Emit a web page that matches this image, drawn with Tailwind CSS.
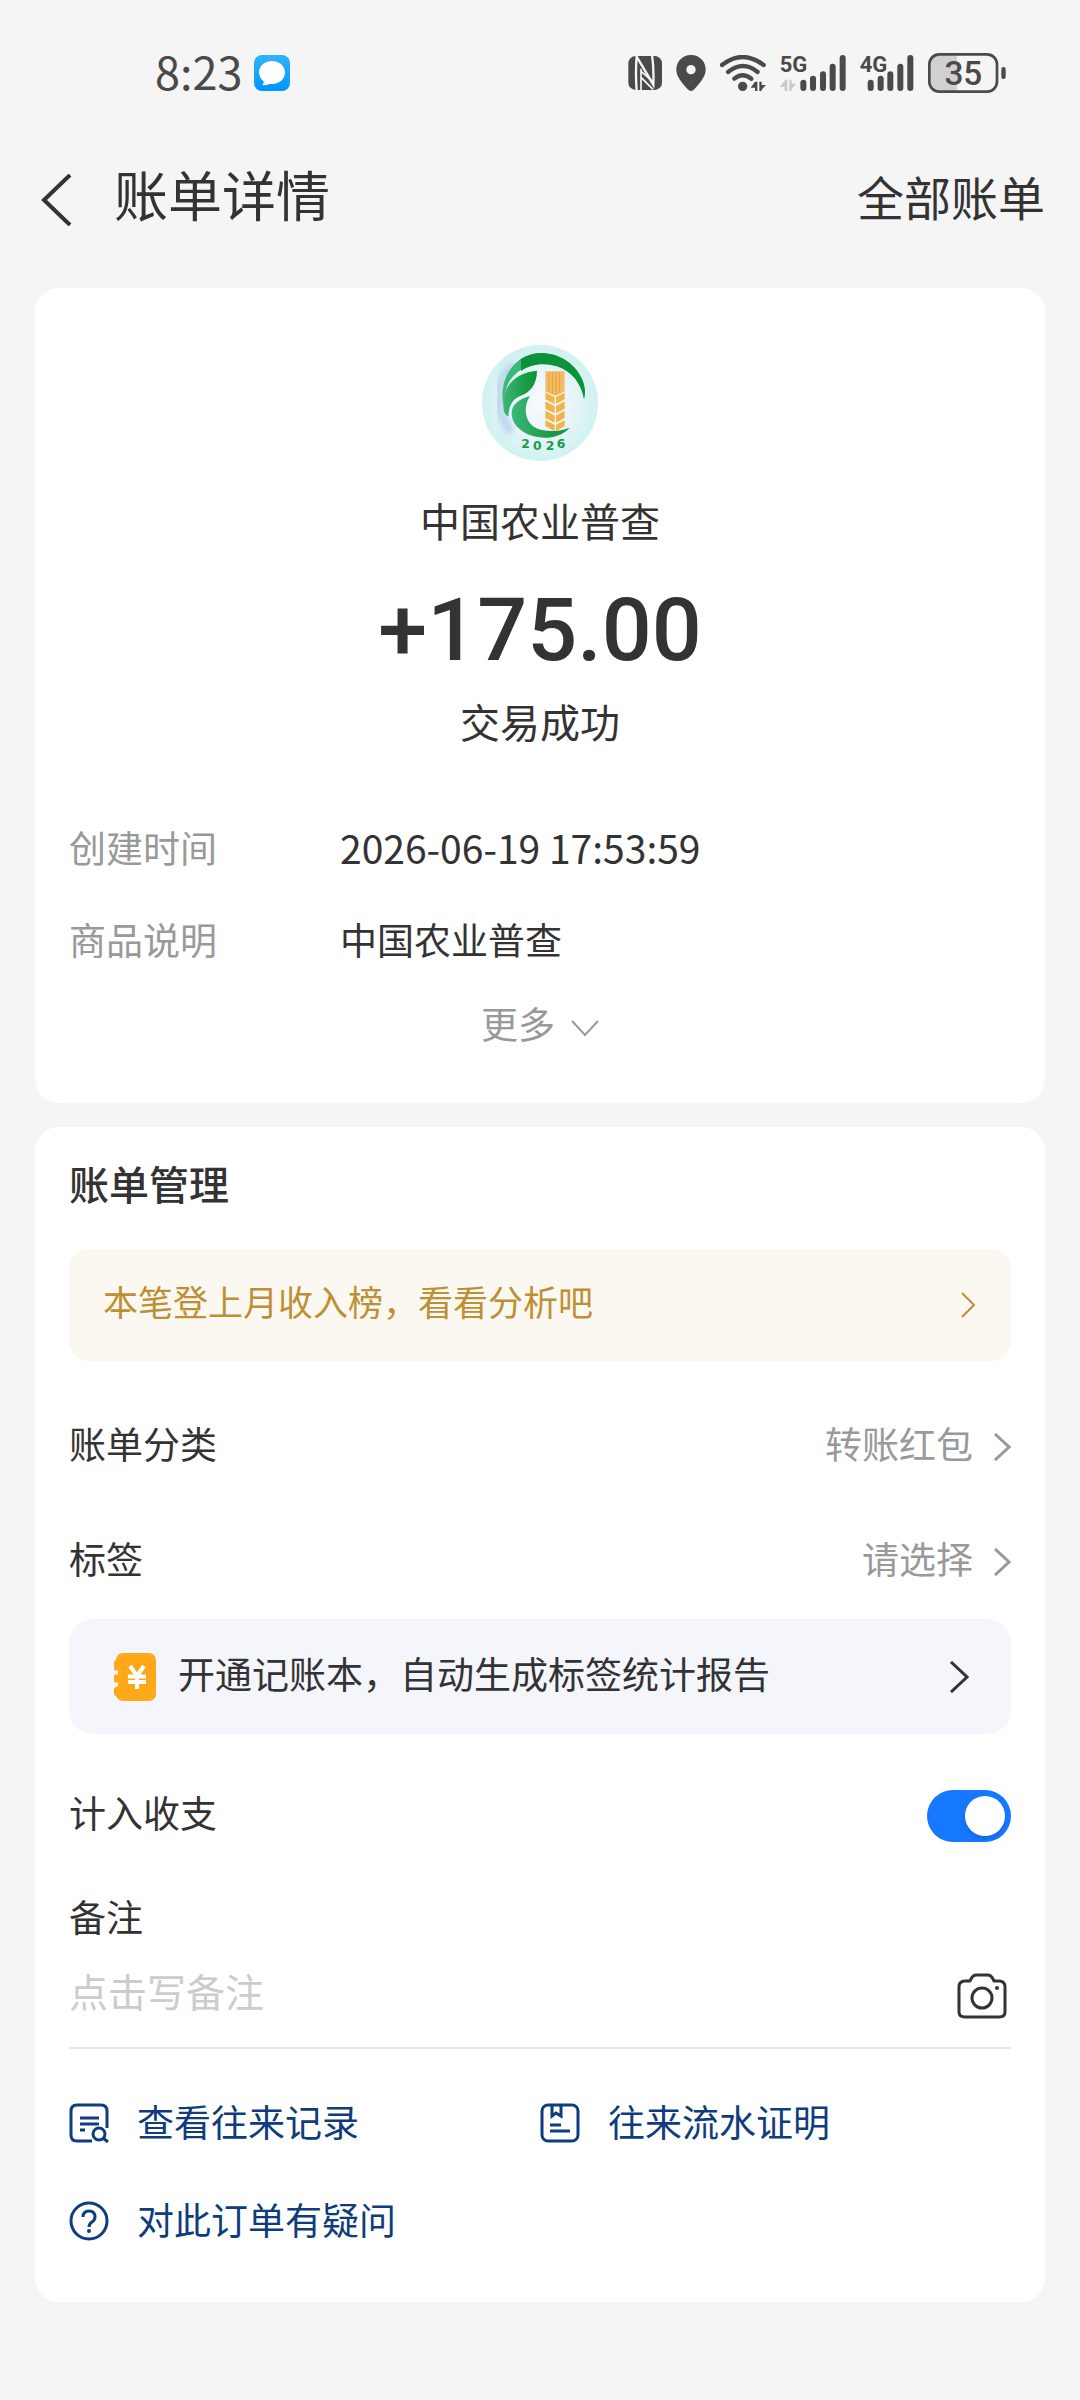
<!doctype html>
<html lang="zh-CN">
<head>
  <meta charset="UTF-8">
  <meta name="viewport" content="width=device-width, initial-scale=1.0">
  <title>账单详情</title>
  <script src="https://cdn.jsdelivr.net/npm/@tailwindcss/browser@4"></script>
</head>
<body class="min-h-screen bg-[#f5f5f5] font-['Noto_Sans_CJK_SC',sans-serif] text-[#333]">
  <!-- status bar -->
  <div class="flex h-[146px] items-center justify-between pl-[155px] pr-[74px] text-[#4a4a4a]">
    <div class="flex items-center gap-3">
      <span class="pb-1 text-[45px] leading-[52px]">8:23</span>
      <svg class="h-9 w-9" viewBox="0 0 36 36" aria-hidden="true">
        <defs>
          <linearGradient id="msg" x1="0" y1="0" x2="0" y2="1">
            <stop offset="0" stop-color="#2fb4fb"/>
            <stop offset="1" stop-color="#0096ff"/>
          </linearGradient>
        </defs>
        <rect width="36" height="36" rx="8" fill="url(#msg)"/>
        <path d="M18 6c7.500 0 13 5 13 11.500S25.500 29 18 29l-2-.2c-2.500 1.200-5 1.700-8 1.200 1.500-1 2-2.500 1.600-3.800C6.700 24 5 21 5 17.500 5 11 10.500 6 18 6z" fill="#fff"/>
      </svg>
    </div>
    <div class="flex items-center gap-[14px]">
      <svg class="h-9 w-[34px]" viewBox="81 75 102 108" aria-label="NFC">
        <rect x="82" y="78" width="101" height="102" rx="22" fill="currentColor"/>
        <path d="M107 184q-4-60 0-104l50 84q2-50-4-90" fill="none" stroke="#f5f5f5" stroke-width="7"/>
        <path d="M120 182v-66M118 122l36 32M118 140l38 38" fill="none" stroke="#f5f5f5" stroke-width="5"/>
      </svg>
      <svg class="h-9 w-[30px]" viewBox="225 75 90 108" aria-hidden="true">
        <path fill="currentColor" fill-rule="evenodd" d="M270 75c-25 0-44 19-44 43 0 22 14 37 34 60q10 10 20 0c20-23 34-38 34-60 0-24-19-43-44-43zm0 30a14 14 0 1 1 0 28 14 14 0 0 1 0-28z"/>
      </svg>
      <svg class="h-9 w-[46px]" viewBox="359 75 138 108" aria-hidden="true">
        <g fill="none" stroke="currentColor" stroke-width="13" stroke-linecap="round">
          <path d="M365 105q62-48 125 0"/>
          <path d="M383 126q45-36 89 0"/>
          <path d="M402 146q25-20 51 0"/>
        </g>
        <circle cx="427" cy="169" r="14" fill="currentColor"/>
        <path fill="currentColor" d="M464 155h7v28h-7v-10h-13zM477 155h7v10h13l-13 14v4h-7z"/>
      </svg>
      <svg class="h-9 w-[66px] overflow-visible" viewBox="540 75 198 108" aria-label="5G">
        <text x="539" y="126" font-family="Roboto" font-size="66" font-weight="700" fill="currentColor">5G</text>
        <path fill="#c9c9c9" d="M556 149h6v34h-8v-12h-14zM568 149h7v12h13l-13 16v6h-7z"/>
        <g stroke="currentColor" stroke-width="18" stroke-linecap="round">
          <path d="M610 158v16M639 146v28M669 133v41M698 110v64M728 84v90"/>
        </g>
      </svg>
      <svg class="h-9 w-[54px] overflow-visible" viewBox="781 75 162 108" aria-label="4G">
        <text x="780" y="126" font-family="Roboto" font-size="66" font-weight="700" fill="currentColor">4G</text>
        <g stroke="currentColor" stroke-width="18" stroke-linecap="round">
          <path d="M813 158v16M843 146v28M872 133v41M902 110v64M932 84v90"/>
        </g>
      </svg>
      <svg class="h-10 w-[78px] overflow-visible" viewBox="984 69 234 120" aria-label="35%">
        <path d="M1071 76h-56q-25 0-25 25v57q0 25 25 25h56z" fill="#d0d0d0"/>
        <rect x="988" y="73" width="203" height="112" rx="30" fill="none" stroke="currentColor" stroke-width="8"/>
        <rect x="1204" y="111" width="13" height="36" rx="6" fill="currentColor"/>
        <text x="1090" y="165" text-anchor="middle" font-family="Roboto" font-size="100" font-weight="500" fill="currentColor">35</text>
      </svg>
    </div>
  </div>

  <header class="flex h-24 items-center justify-between pl-10 pr-[35px]">
    <div class="flex items-center gap-[42px]">
      <button type="button" aria-label="返回" class="pt-3">
        <svg class="h-[52px] w-8" viewBox="0 0 32 52" fill="none" stroke="currentColor" stroke-width="4" aria-hidden="true"><path d="M30 1L4 26l26 25"/></svg>
      </button>
      <h1 class="text-[54px] leading-[64px]">账单详情</h1>
    </div>
    <a href="#all" class="pt-1 text-[47px] leading-[64px]">全部账单</a>
  </header>

  <main class="px-[35px] pt-[46px] pb-10">
    <section class="flex flex-col items-center rounded-3xl bg-white px-[34px] pt-[57px] pb-[54px]">
      <svg class="h-[116px] w-[116px]" viewBox="126 78 348 348" aria-label="中国农业普查 2026">
        <defs>
          <radialGradient id="disc" cx="0.5" cy="0.5" r="0.5">
            <stop offset="0" stop-color="#f7fbff"/>
            <stop offset="0.55" stop-color="#e9f5fb"/>
            <stop offset="1" stop-color="#cff2f0"/>
          </radialGradient>
          <linearGradient id="leaf" x1="0" y1="0" x2="1" y2="0">
            <stop offset="0" stop-color="#3cb878"/>
            <stop offset="0.55" stop-color="#1fa04c"/>
            <stop offset="1" stop-color="#0c9238"/>
          </linearGradient>
          <filter id="soft"><feGaussianBlur stdDeviation="10"/></filter>
        </defs>
        <circle cx="300" cy="252" r="174" fill="url(#disc)"/>
        <path d="M225 135c-60 45-66 140-10 205" fill="none" stroke="#b9d3ec" stroke-width="24" filter="url(#soft)"/>
        <path d="M243 119c55-36 148-16 183 60 9 20 12 42 6 62-8-44-34-84-82-99-40-12-78-6-107 14z" fill="#0c9238"/>
        <path d="M243 119c-42 28-64 84-53 142 2-56 20-88 53-109z" fill="#3cb878"/>
        <path d="M192 278c-12-64 24-116 99-123 0 40-20 66-50 76-24 9-34 28-36 62-6-4-10-9-13-15z" fill="url(#leaf)"/>
        <path d="M270 231c-22 34-18 88 32 101 30 7 58 6 87-6-26 28-68 36-108 26-44-12-68-42-66-72 2-26 24-40 55-49z" fill="url(#leaf)"/>
        <g fill="#f2b24c">
          <path d="M316 157h58v62l-28 14-30-14z" fill="#f4bd65"/>
          <path d="M316 219l28 14v22l-28-14zM374 219l-26 14v22l26-14zM316 247l28 14v22l-28-14zM374 247l-26 14v22l26-14zM316 275l28 14v22l-28-14zM374 275l-26 14v22l26-14zM316 303l28 14v20l-28-16zM374 303l-26 14v20l26-16z"/>
        </g>
        <path d="M327 160v60M337 160v66M348 160v68M359 160v62" stroke="#e39f38" stroke-width="3"/>
        <path d="M316 219l30 14 28-14M316 245l30 14 28-14M316 273l30 14 28-14M316 301l30 14 28-14" fill="none" stroke="#fdf3dd" stroke-width="4"/>
        <text x="244 279 317 350" y="387 393 393 387" font-family="DejaVu Sans" font-size="37" font-weight="700" fill="#1a9a4a">2026</text>
      </svg>
      <h2 class="mt-[31px] text-[40px] leading-[56px]">中国农业普查</h2>
      <p class="mt-8 font-['Roboto',sans-serif] text-[88px] leading-[100px] font-medium">+175.00</p>
      <p class="mt-[13px] text-[40px] leading-[56px]">交易成功</p>
      <dl class="mt-[72px] grid w-full grid-cols-[271px_1fr] gap-y-10 text-[37px] leading-[52px]">
        <dt class="text-[#999]">创建时间</dt>
        <dd class="text-[39px]">2026-06-19 17:53:59</dd>
        <dt class="text-[#999]">商品说明</dt>
        <dd>中国农业普查</dd>
      </dl>
      <button type="button" class="mt-8 flex items-center gap-4 text-[37px] leading-[52px] text-[#999]">
        更多
        <svg class="mt-3 h-[18px] w-7" viewBox="0 0 28 18" fill="none" stroke="currentColor" stroke-width="2" aria-hidden="true"><path d="M1 1l13 14L27 1"/></svg>
      </button>
    </section>

    <section class="mt-6 rounded-3xl bg-white px-[34px] pt-7 pb-[53px] text-[37px] leading-[52px]">
      <h2 class="text-[40px] leading-[56px] font-medium">账单管理</h2>

      <a href="#analysis" class="mt-[38px] flex h-28 items-center justify-between rounded-[20px] bg-[#fbf8f1] pl-[34px] pr-[35px] text-[35px] text-[#bd9036]">
        <span class="pb-2">本笔登上月收入榜，看看分析吧</span>
        <svg class="h-[26px] w-4" viewBox="0 0 16 26" fill="none" stroke="currentColor" stroke-width="2" aria-hidden="true"><path d="M2 1l12 12L2 25"/></svg>
      </a>

      <div class="mt-6">
        <button type="button" class="flex h-[115px] w-full items-center justify-between">
          <span>账单分类</span>
          <span class="flex items-center gap-5 text-[#999]">
            转账红包
            <svg class="mt-2 h-7 w-[18px]" viewBox="0 0 18 28" fill="none" stroke="currentColor" stroke-width="3" aria-hidden="true"><path d="M2 1l14 13L2 27"/></svg>
          </span>
        </button>
        <button type="button" class="flex h-[115px] w-full items-center justify-between">
          <span>标签</span>
          <span class="flex items-center gap-5 text-[#999]">
            请选择
            <svg class="mt-2 h-7 w-[18px]" viewBox="0 0 18 28" fill="none" stroke="currentColor" stroke-width="3" aria-hidden="true"><path d="M2 1l14 13L2 27"/></svg>
          </span>
        </button>
      </div>

      <a href="#book" class="mt-1 flex h-[115px] items-center rounded-3xl bg-[#f5f6fb] pl-[45px] pr-[42px]">
        <svg class="h-12 w-[42px]" viewBox="0 0 42 48" aria-hidden="true">
          <rect x="2" y="0" width="40" height="48" rx="7" fill="#ffa91a"/>
          <path d="M2 9v5M2 17v1M2 23v5M2 36v5" stroke="#ffa91a" stroke-width="4" stroke-linecap="round"/>
          <path d="M0 19.500h4M0 31.500h4" stroke="#f5f6fb" stroke-width="4"/>
          <path d="M16 13l7 10 7-10M23 23v13M14 23.500h18M14 29h18" fill="none" stroke="#fff" stroke-width="4"/>
        </svg>
        <span class="ml-[22px] pb-2">开通记账本，自动生成标签统计报告</span>
        <svg class="ml-auto h-8 w-5" viewBox="0 0 20 32" fill="none" stroke="currentColor" stroke-width="3" aria-hidden="true"><path d="M2 1l16 15L2 31"/></svg>
      </a>

      <div class="mt-10 flex h-[84px] items-center justify-between">
        <label for="count" class="pb-2">计入收支</label>
        <input id="count" type="checkbox" role="switch" checked class="flex h-[52px] w-[84px] cursor-pointer appearance-none items-center rounded-full bg-gray-300 px-[6px] before:h-10 before:w-10 before:rounded-full before:bg-white before:shadow-md checked:justify-end checked:bg-[#1677ff]">
      </div>

      <label for="note" class="mt-8 block">备注</label>
      <div class="mt-6 flex items-center justify-between border-b-2 border-[#e8e8e8] pb-[25px]">
        <input id="note" type="text" placeholder="点击写备注" class="h-14 min-w-0 flex-1 pb-2 text-[39px] outline-none placeholder:text-[#ccc]">
        <button type="button" aria-label="添加图片" class="mr-1 pt-1">
          <svg class="h-[46px] w-[50px]" viewBox="0 0 50 46" fill="none" stroke="currentColor" stroke-width="3" stroke-linejoin="round" aria-hidden="true">
            <path d="M8 8h5l1-2q2-4 5-4h12q3 0 5 4l1 2h5q6 0 6 6v25q0 5-6 5H8q-6 0-6-5V14q0-6 6-6z"/>
            <circle cx="25" cy="25" r="10"/>
            <circle cx="40" cy="15" r="2" fill="currentColor" stroke="none"/>
          </svg>
        </button>
      </div>

      <nav class="mt-[46px] grid grid-cols-2 gap-y-[42px] text-[#0f3c7c]">
        <a href="#records" class="flex items-center gap-7">
          <svg class="h-10 w-10" viewBox="0 0 40 40" fill="none" stroke="currentColor" stroke-width="3" aria-hidden="true">
            <path d="M23 38H8q-6 0-6-6V8q0-6 6-6h24q6 0 6 6v17" />
            <path d="M11 15h19M11 21h19M11 27h5"/>
            <circle cx="30" cy="31" r="6"/>
            <path d="M34 35l5 4"/>
          </svg>
          <span class="pb-1">查看往来记录</span>
        </a>
        <a href="#proof" class="flex items-center gap-7">
          <svg class="h-10 w-10" viewBox="0 0 40 40" fill="none" stroke="currentColor" stroke-width="3" aria-hidden="true">
            <rect x="2" y="2" width="36" height="36" rx="6"/>
            <path d="M12 2v11l4-3 5 3V2M10 22h11M10 28h20"/>
          </svg>
          <span class="pb-1">往来流水证明</span>
        </a>
        <a href="#help" class="flex items-center gap-7">
          <svg class="h-10 w-10" viewBox="0 0 40 40" fill="none" stroke="currentColor" stroke-width="3" aria-hidden="true">
            <circle cx="20" cy="20" r="18"/>
            <path d="M14 16q0-6 6-6t6 6q0 3-3 5t-3 5"/>
            <circle cx="20" cy="30" r="2" fill="currentColor" stroke="none"/>
          </svg>
          <span class="pb-1">对此订单有疑问</span>
        </a>
      </nav>
    </section>
  </main>
</body>
</html>
